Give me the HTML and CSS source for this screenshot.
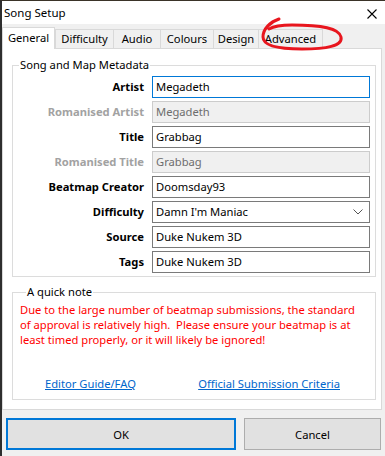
FILE: index.html
```html
<!DOCTYPE html>
<html>
<head>
<meta charset="utf-8">
<link rel="stylesheet" href="styles.css">
</head>
<body>
<div class="window">
  <div class="titlebar">
    <span class="title">Song Setup</span>
    <svg class="close" width="10" height="10" viewBox="0 0 10 10"><path d="M0.5 0.5 L9.5 9.5 M9.5 0.5 L0.5 9.5" stroke="#000" stroke-width="1.1" fill="none"/></svg>
  </div>
  <div class="tabs">
    <div class="tab active t-general">General</div>
    <div class="tab t-diff">Difficulty</div>
    <div class="tab t-audio">Audio</div>
    <div class="tab t-col">Colours</div>
    <div class="tab t-design">Design</div>
    <div class="tab t-adv">Advanced</div>
    <svg class="circle" width="385" height="60" viewBox="0 0 385 60"><path d="M279 19 C270 22 263 29 263 37 C263 46 278 49 302 49 C326 49 343 46 341 37 C339 28 322 25 292 25 C282 25 274 26 269 29" stroke="#e8161e" stroke-width="3" fill="none" stroke-linecap="round"/></svg>
  </div>
  <div class="panel">
    <fieldset class="group meta">
      <legend>Song and Map Metadata</legend>
      <div class="grid">
        <div class="label">Artist</div><div class="field focus">Megadeth</div>
        <div class="label dis">Romanised Artist</div><div class="field disabled">Megadeth</div>
        <div class="label">Title</div><div class="field">Grabbag</div>
        <div class="label dis">Romanised Title</div><div class="field disabled">Grabbag</div>
        <div class="label">Beatmap Creator</div><div class="field">Doomsday93</div>
        <div class="label">Difficulty</div><div class="field select"><span>Damn I'm Maniac</span><svg width="10" height="6" viewBox="0 0 10 6"><path d="M0.5 0.5 L5 5 L9.5 0.5" stroke="#555" stroke-width="1" fill="none"/></svg></div>
        <div class="label">Source</div><div class="field">Duke Nukem 3D</div>
        <div class="label">Tags</div><div class="field">Duke Nukem 3D</div>
      </div>
    </fieldset>
    <fieldset class="group note">
      <legend>A quick note</legend>
      <p class="warn">Due to the large number of beatmap submissions, the standard of approval is relatively high.&nbsp; Please ensure your beatmap is at least timed properly, or it will likely be ignored!</p>
      <div class="links">
        <a class="link l1">Editor Guide/FAQ</a>
        <a class="link l2">Official Submission Criteria</a>
      </div>
    </fieldset>
  </div>
  <div class="buttons">
    <div class="btn ok">OK</div>
    <div class="btn cancel">Cancel</div>
  </div>
</div>
</body>
</html>
```
FILE: styles.css
```css
* { box-sizing: border-box; }
html, body { margin: 0; padding: 0; }
body {
  width: 385px;
  height: 456px;
  overflow: hidden;
  background: #f0f0f0;
  font-family: "Noto Sans", "Open Sans", sans-serif;
  font-size: 11.2px;
  color: #000;
}
.window {
  width: 385px;
  height: 456px;
  border-left: 2px solid #2e2e2e;
  border-top: 1px solid #3a3328;
  background: #f0f0f0;
  position: relative;
}
.titlebar {
  height: 23px;
  background: #fff;
  display: flex;
  align-items: center;
  justify-content: space-between;
  padding: 0 8px 0 2px;
}
.title { font-size: 11.5px; line-height: 16px; }
.close { margin-top: 2px; }
.tabs {
  height: 24px;
  display: flex;
  align-items: flex-end;
  position: relative;
}
.tab {
  height: 19px;
  border: 1px solid #d9d9d9;
  border-bottom: none;
  background: #f0f0f0;
  line-height: 17px;
  text-align: center;
  margin-left: -1px;
  white-space: nowrap;
}
.tab.active {
  height: 22px;
  background: #fff;
  margin-bottom: -1px;
  margin-left: 0;
  line-height: 19px;
  position: relative;
  z-index: 2;
}
.t-general { width: 53px; }
.t-diff { width: 59px; margin-left: 0; }
.t-audio { width: 48px; }
.t-col { width: 54px; }
.t-design { width: 46px; }
.t-adv { width: 65px; }
.circle {
  position: absolute;
  left: -2px;
  top: -24px;
  z-index: 3;
  pointer-events: none;
}
.panel {
  margin: 0 3px 0 0;
  height: 362px;
  background: #fff;
  border: 1px solid #d9d9d9;
  padding: 8px 5px 0 9px;
}
.group {
  margin: 0;
  border: 1px solid #dcdcdc;
  padding: 0;
}
.group legend {
  padding: 0 1px;
  margin-left: 6px;
  line-height: 16px;
}
.meta { padding: 3px 5px 3px 0; }
.grid {
  display: grid;
  grid-template-columns: 131px 218px;
  column-gap: 8px;
  row-gap: 3px;
}
.label {
  font-weight: bold;
  text-align: right;
  line-height: 22px;
  height: 22px;
  white-space: nowrap;
}
.label.dis { color: #a2a2a2; }
.field {
  height: 22px;
  border: 1px solid #7a7a7a;
  line-height: 20px;
  padding-left: 3px;
  background: #fff;
  white-space: nowrap;
}
.field.focus { border-color: #0078d7; }
.field.disabled {
  background: #f0f0f0;
  border-color: #cccccc;
  color: #6d6d6d;
}
.field.select {
  display: flex;
  align-items: center;
  justify-content: space-between;
  padding-right: 6px;
}
.note {
  margin-top: 7px;
  padding: 2px 6px 8px 7px;
}
.warn {
  margin: 0;
  width: 342px;
  color: #ff0000;
  line-height: 15px;
}
.links {
  margin-top: 29px;
  display: flex;
  line-height: 15px;
}
.link {
  color: #0066cc;
  text-decoration: underline;
  cursor: pointer;
}
.l1 { margin-left: 25px; }
.l2 { margin-left: auto; margin-right: 29px; }
.buttons {
  display: flex;
  gap: 8px;
  padding: 8px 0 0 4px;
}
.btn {
  height: 32px;
  background: #e1e1e1;
  display: flex;
  align-items: center;
  justify-content: center;
}
.ok { width: 230px; border: 2px solid #0078d7; }
.cancel { width: 137px; border: 1px solid #adadad; }
```
